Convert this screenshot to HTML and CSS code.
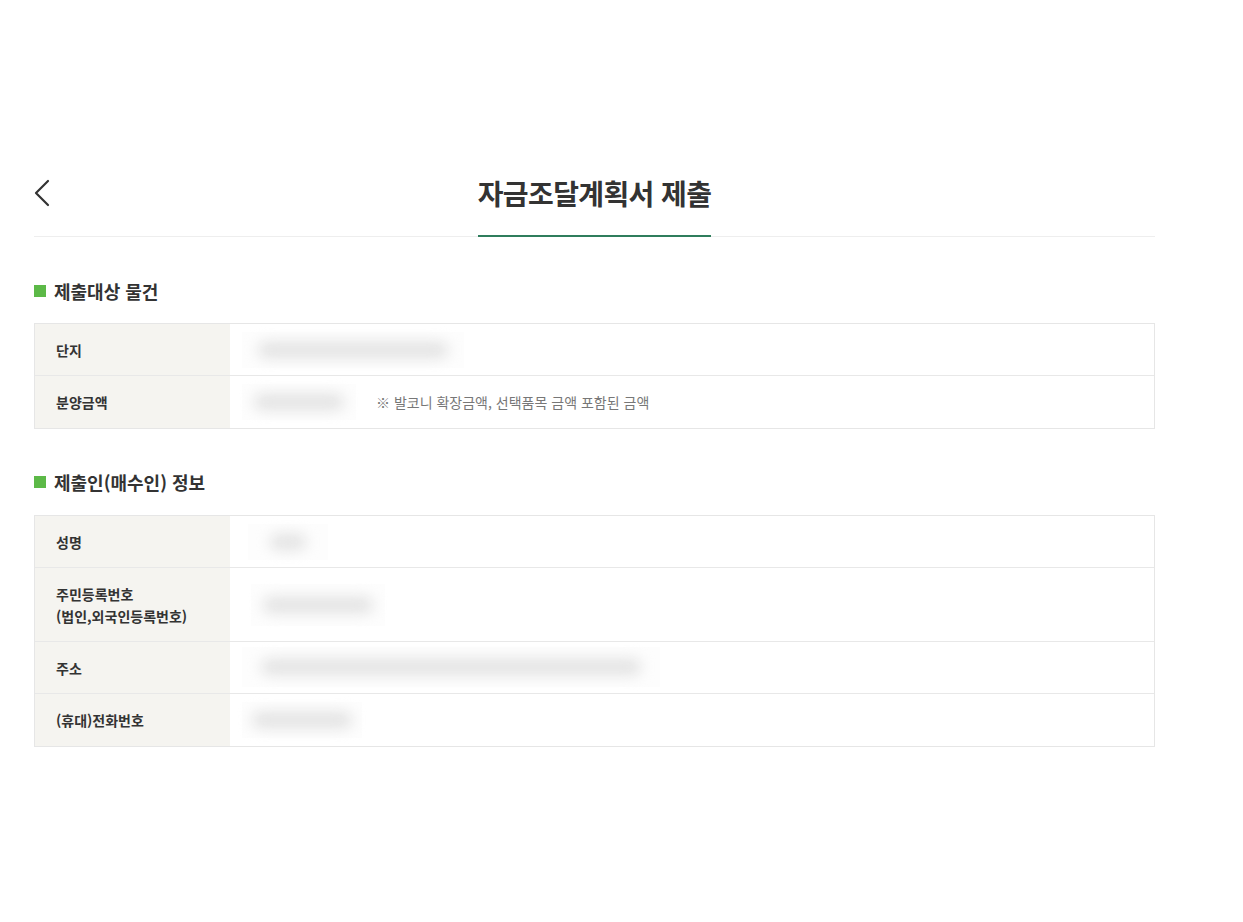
FILE: index.html
```html
<!DOCTYPE html>
<html lang="ko">
<head>
<meta charset="utf-8">
<title>자금조달계획서 제출</title>
<link rel="stylesheet" href="styles.css">
</head>
<body>
<div class="page">
  <header class="header">
    <a class="back" href="#" aria-label="뒤로">
      <svg width="18" height="28" viewBox="0 0 18 28"><path d="M15 2 L3 14 L15 26" fill="none" stroke="#333" stroke-width="2.2" stroke-linecap="round" stroke-linejoin="round"/></svg>
    </a>
    <h1 class="title">자금조달계획서 제출</h1>
    <div></div>
  </header>

  <section class="section first">
    <h2 class="sec-title"><span class="sq"></span>제출대상 물건</h2>
    <div class="table">
      <div class="row">
        <div class="label">단지</div>
        <div class="value"><span class="redact" style="width:222px"><span class="blur" style="width:190px"></span></span></div>
      </div>
      <div class="row last">
        <div class="label">분양금액</div>
        <div class="value"><span class="redact" style="width:114px"><span class="blur" style="width:90px"></span></span><span class="note">※ 발코니 확장금액, 선택품목 금액 포함된 금액</span></div>
      </div>
    </div>
  </section>

  <section class="section second">
    <h2 class="sec-title"><span class="sq"></span>제출인(매수인) 정보</h2>
    <div class="table">
      <div class="row">
        <div class="label">성명</div>
        <div class="value"><span class="redact shift" style="width:80px"><span class="blur" style="width:36px"></span></span></div>
      </div>
      <div class="row tall">
        <div class="label">주민등록번호<br>(법인,외국인등록번호)</div>
        <div class="value"><span class="redact shift2" style="width:134px"><span class="blur" style="width:110px"></span></span></div>
      </div>
      <div class="row">
        <div class="label">주소</div>
        <div class="value"><span class="redact wide" style="width:418px"><span class="blur" style="width:380px"></span></span></div>
      </div>
      <div class="row last">
        <div class="label">(휴대)전화번호</div>
        <div class="value"><span class="redact" style="width:120px"><span class="blur" style="width:100px"></span></span></div>
      </div>
    </div>
  </section>
</div>
</body>
</html>
```

FILE: styles.css
```css
* { box-sizing: border-box; }
html, body { margin: 0; padding: 0; background: #fff; }
body {
  font-family: "Noto Sans CJK KR", "Noto Sans", "Liberation Sans", sans-serif;
  color: #333;
}
.page {
  width: 1121px;
  margin-left: 34px;
  padding-top: 174px;
}
.header {
  display: grid;
  grid-template-columns: 1fr auto 1fr;
  align-items: end;
  border-bottom: 1px solid #eeeeee;
}
.back {
  align-self: start;
  margin-top: 5px;
  margin-left: -1px;
  display: block;
  width: 18px;
  height: 28px;
}
.back svg { display: block; }
.title {
  margin: 0 0 -1px 0;
  font-size: 28px;
  line-height: 39px;
  font-weight: 700;
  color: #333;
  padding-bottom: 22px;
  border-bottom: 2px solid #2f7d5c;
  letter-spacing: -0.6px;
}
.section.first { margin-top: 41px; }
.section.second { margin-top: 40px; }
.sec-title {
  margin: 0 0 19px 0;
  display: flex;
  align-items: center;
  gap: 8px;
  font-size: 18px;
  line-height: 26px;
  font-weight: 700;
  color: #333;
}
.second .sec-title { margin-bottom: 20px; }
.sq {
  width: 12px;
  height: 12px;
  background: #5cb947;
  display: inline-block;
}
.table {
  border: 1px solid #e6e6e6;
}
.row {
  display: grid;
  grid-template-columns: 195px 1fr;
  min-height: 52px;
  border-top: 1px solid #e8e8e8;
}
.row:first-child { border-top: 0; min-height: 51px; }
.row.last { min-height: 53px; }
.row.tall { min-height: 74px; }
.label {
  background: #f5f4f0;
  padding: 0 0 0 21px;
  display: flex;
  align-items: center;
  font-size: 14px;
  line-height: 22px;
  font-weight: 700;
  color: #333;
}
.value {
  display: flex;
  align-items: center;
  padding-left: 12px;
  font-size: 14px;
  color: #777;
}
.redact {
  display: inline-flex;
  align-items: center;
  justify-content: center;
  height: 36px;
  background: #fdfdfd;
}
.redact.shift { margin-left: 6px; }
.redact.shift2 { margin-left: 9px; height: 42px; }
.redact.wide { height: 40px; margin-top: -1px; }
.blur {
  display: block;
  height: 16px;
  background: #e2e2e2;
  border-radius: 8px;
  filter: blur(7px);
}
.note {
  margin-left: 20px;
  color: #777;
  font-size: 14px;
}
```
